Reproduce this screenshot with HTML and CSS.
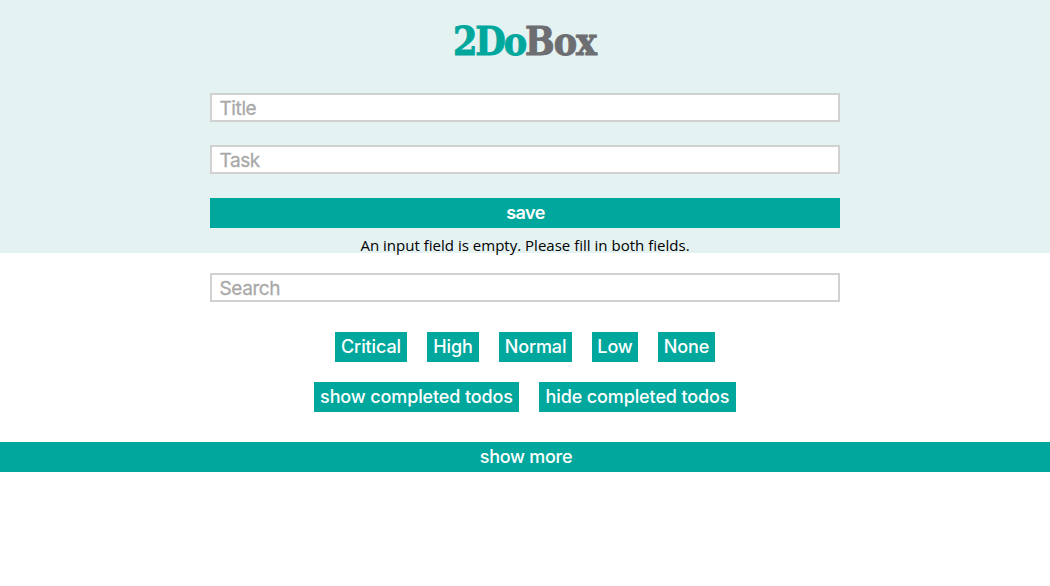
FILE: index.html
```
<!DOCTYPE html>
<html lang="en">
<head>
<meta charset="utf-8">
<title>2DoBox</title>
<link rel="stylesheet" href="styles.css">
</head>
<body>
<header class="entry">
  <h1 class="logo"><span class="logo-accent">2Do</span>Box</h1>
  <form class="entry-form">
    <input class="field" type="text" placeholder="Title" aria-label="Title">
    <input class="field" type="text" placeholder="Task" aria-label="Task">
    <button class="button save" type="button">save</button>
  </form>
  <p class="message">An input field is empty. Please fill in both fields.</p>
</header>
<main>
  <input class="field search" type="text" placeholder="Search" aria-label="Search">
  <div class="row filters">
    <button class="button critical">Critical</button>
    <button class="button high">High</button>
    <button class="button normal">Normal</button>
    <button class="button low">Low</button>
    <button class="button none">None</button>
  </div>
  <div class="row">
    <button class="button show">show completed todos</button>
    <button class="button hide">hide completed todos</button>
  </div>
  <button class="button more">show more</button>
</main>
</body>
</html>
```
FILE: styles.css
```
* { box-sizing: border-box; }
body {
  margin: 0;
  background: #fff;
  font-family: "Open Sans", sans-serif;
}
.entry {
  height: 253px;
  padding-top: 16px;
  background: #e5f2f2;
}
.logo {
  width: max-content;
  height: 50px;
  margin: 0 auto 27px;
  padding-right: 1px;
  color: #6d6e71;
  font: 700 39px/50px "Roboto Slab", "DejaVu Serif", serif;
  font-stretch: condensed;
  letter-spacing: -1px;
  -webkit-text-stroke: 0.9px currentColor;
}
.logo-accent {
  color: #00a79d;
  letter-spacing: -2.1px;
}
.entry-form {
  display: flex;
  flex-direction: column;
  gap: 23px;
  width: 630px;
  margin: 0 auto;
}
.field {
  display: block;
  width: 630px;
  height: 29px;
  padding: 1px 8px 0 7.5px;
  border: 2px solid #d1d1d1;
  border-radius: 0;
  background: #fff;
  font: 400 19px/24px Inter, sans-serif;
  letter-spacing: -0.4px;
}
.field::placeholder {
  color: #a9a9a9;
  opacity: 1;
  -webkit-text-stroke: 0.3px #a9a9a9;
}
.button {
  height: 30px;
  padding: 0;
  border: 0;
  background: #00a79d;
  color: #fff;
  font: 500 18px/30px Inter, sans-serif;
  letter-spacing: -0.12px;
  white-space: nowrap;
}
.save {
  margin-top: 1px;
  padding-left: 1px;
  font-weight: 600;
  letter-spacing: -0.6px;
}
.message {
  margin: 7px 0 0;
  font-size: 15.04px;
  line-height: 20px;
  text-align: center;
  color: #000;
}
.search { margin: 20px auto 30px; }
.row {
  display: flex;
  justify-content: center;
  gap: 20px;
}
.filters { margin-bottom: 20px; }
.critical { width: 72px; }
.high { width: 52px; }
.normal { width: 73px; }
.low { width: 46px; }
.none { width: 57px; }
.show { width: 205px; }
.hide { width: 197px; }
.more {
  display: block;
  width: 100%;
  margin-top: 30px;
  padding-left: 2px;
  letter-spacing: -0.25px;
}
```
